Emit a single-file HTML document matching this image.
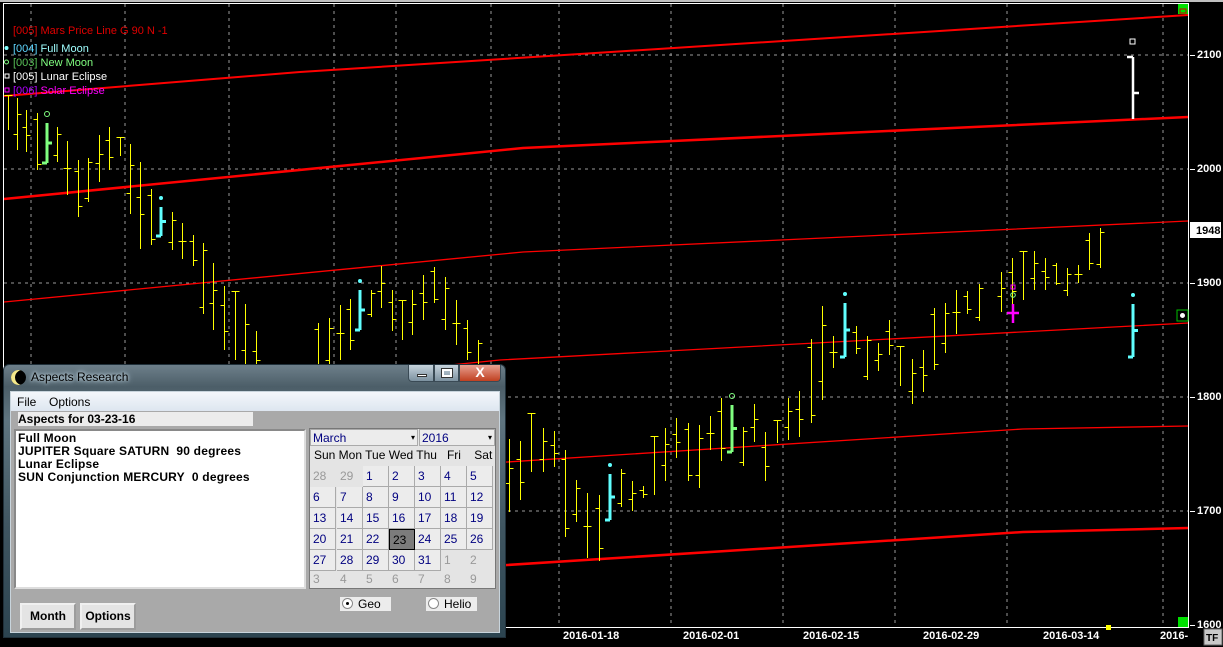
<!DOCTYPE html>
<html><head><meta charset="utf-8">
<style>
*{margin:0;padding:0;box-sizing:border-box}
body{width:1223px;height:647px;background:#000;position:relative;overflow:hidden;font-family:"Liberation Sans",sans-serif}
svg{position:absolute;left:0;top:0}
.dlg{position:absolute;left:3px;top:364px;width:503px;height:274px;border-radius:6px 6px 0 0;border:1px solid #20303a;
background:linear-gradient(180deg,#6d7f8a 0%,#4c5e68 8%,#5f7580 20%,#3f5560 60%,#2c4450 100%)}
.title{position:absolute;left:27px;top:5px;font-size:12px;color:#000;text-shadow:0 0 6px #cfe3ee,0 0 3px #cfe3ee}
.moon{position:absolute;left:7px;top:5px;width:15px;height:15px;border-radius:50%;background:#000;box-shadow:inset 4px 0 0 #f4e88a}
.cb{position:absolute;top:0;height:17px;border:1px solid #3a4a55;border-top:none}
.client{position:absolute;left:6px;top:26px;width:490px;height:242px;background:#a9a9a9;border:1px solid #c8d4dc}
.menu{position:absolute;left:0;top:0;width:488px;height:19px;background:linear-gradient(#f4f7fb,#dde6f0);font-size:12px;color:#000}
.menu span{position:absolute;top:3px}
.lab{position:absolute;left:7px;top:20px;width:235px;height:14px;background:#ececec;font-size:12px;font-weight:bold;line-height:14px;padding-left:0}
.list{position:absolute;left:3px;top:37px;width:292px;height:160px;background:#fff;border:2px inset #ddd;font-size:12px;font-weight:bold;line-height:13px;padding:1px 0 0 2px;letter-spacing:.2px}
.cal{position:absolute;left:298px;top:36px;width:187px;height:161px;background:#e4e4e4;border:1px solid #777;font-size:12px}
.cal .c{position:absolute;width:26px;height:21px;line-height:20px;padding-left:3px;color:#000080}
.cal .g{color:#999;background:none!important;border:none!important}
.btn{position:absolute;top:211px;height:27px;background:#e4e4e4;border:2px outset #f0f0f0;font-size:12px;font-weight:bold;text-align:center;line-height:22px}
.rad{position:absolute;top:205px;height:14px;background:#ececec;font-size:12px;line-height:14px}
.rad i{position:absolute;left:2px;top:1px;width:11px;height:11px;border-radius:50%;border:1px solid #888;background:#fff}
.ax{position:absolute;color:#fff;font-size:11px;font-weight:bold}
</style></head><body>
<svg width="1223" height="647" id="s">
<rect x="0" y="0" width="1223" height="2" fill="#bfbfbf"/>
<g stroke="#9a9a9a" stroke-dasharray="3,4" stroke-width="1">
<line x1="31" y1="4" x2="31" y2="627"/><line x1="125" y1="4" x2="125" y2="627"/><line x1="229" y1="4" x2="229" y2="627"/><line x1="334" y1="4" x2="334" y2="627"/><line x1="396" y1="4" x2="396" y2="627"/><line x1="491" y1="4" x2="491" y2="627"/><line x1="559" y1="4" x2="559" y2="627"/><line x1="671" y1="4" x2="671" y2="627"/><line x1="783" y1="4" x2="783" y2="627"/><line x1="895" y1="4" x2="895" y2="627"/><line x1="1007" y1="4" x2="1007" y2="627"/><line x1="1163" y1="4" x2="1163" y2="627"/>
<line x1="4" y1="55" x2="1188" y2="55"/><line x1="4" y1="169" x2="1188" y2="169"/><line x1="4" y1="283" x2="1188" y2="283"/><line x1="4" y1="397" x2="1188" y2="397"/><line x1="4" y1="511" x2="1188" y2="511"/>
</g>
<g fill="none" stroke="#ff0000">
<polyline stroke-width="2" points="4,96 300,72 1188,15"/>
<polyline stroke-width="2.5" points="4,199 523,148 1188,117"/>
<polyline stroke-width="1.3" points="4,302 523,252 1188,221"/>
<polyline stroke-width="1.3" points="4,410 500,360 1188,323"/>
<polyline stroke-width="1.3" points="4,510 507,462 1023,429 1188,426"/>
<polyline stroke-width="2.5" points="4,615 507,565 1023,532 1188,528"/>
</g>
<g id="bars" stroke="#ffff00" stroke-width="1"></g>
<g id="spec"></g>
<line x1="3.5" y1="3" x2="3.5" y2="627" stroke="#fff"/>
<line x1="3" y1="3.5" x2="1188" y2="3.5" stroke="#fff"/>
<line x1="1188.5" y1="3" x2="1188.5" y2="628" stroke="#fff"/>
<line x1="3" y1="627.5" x2="1189" y2="627.5" stroke="#fff"/>
<g stroke="#fff"><line x1="1190" y1="55.5" x2="1195" y2="55.5"/><line x1="1190" y1="169.5" x2="1195" y2="169.5"/><line x1="1190" y1="283.5" x2="1195" y2="283.5"/><line x1="1190" y1="397.5" x2="1195" y2="397.5"/><line x1="1190" y1="511.5" x2="1195" y2="511.5"/><line x1="1190" y1="625.5" x2="1195" y2="625.5"/></g>
<rect x="1178" y="4" width="10" height="10" fill="#00e000"/><rect x="1180" y="9" width="6" height="4" fill="none" stroke="#c00"/>
<rect x="1178" y="617" width="10" height="10" fill="#00e000"/>
<rect x="1177" y="310" width="11" height="11" fill="#000" stroke="#00c000"/><circle cx="1182.5" cy="315.5" r="3" fill="#fff" stroke="#000"/>
<rect x="1106" y="625" width="5" height="5" fill="#ffff00"/>
<rect x="1190" y="222" width="31" height="16" fill="#fff"/>
<text x="1196" y="234" font-size="11" font-weight="bold" font-family="Liberation Sans">1948</text>
<rect x="1204" y="629" width="18" height="16" fill="#c8c8c8" stroke="#666"/>
<text x="1206" y="641" font-size="10" font-weight="bold" fill="#000" font-family="Liberation Sans">TF</text>
<g font-family="Liberation Sans" font-size="11">
<text x="13" y="34" fill="#e00000">[005] Mars Price Line G 90 N -1</text>
<text x="13" y="52" fill="#5fd7ff">[004] <tspan fill="#a0ffff">Full Moon</tspan></text>
<text x="13" y="66" fill="#58c058">[003] <tspan fill="#80ff80">New Moon</tspan></text>
<text x="13" y="80" fill="#fff">[005] Lunar Eclipse</text>
<text x="13" y="94" fill="#b000ff">[006] <tspan fill="#ff00ff">Solar Eclipse</tspan></text>
</g>
<circle cx="6.5" cy="48" r="2" fill="#80ffff"/><circle cx="6.5" cy="62" r="2" fill="none" stroke="#80ff80"/><rect x="5" y="74" width="4" height="4" fill="none" stroke="#fff"/><rect x="5" y="88" width="4" height="4" fill="none" stroke="#f0f"/>
</svg>
<div class="ax" style="left:1197px;top:49px">2100</div>
<div class="ax" style="left:1197px;top:163px">2000</div>
<div class="ax" style="left:1197px;top:277px">1900</div>
<div class="ax" style="left:1197px;top:391px">1800</div>
<div class="ax" style="left:1197px;top:505px">1700</div>
<div class="ax" style="left:1197px;top:619px">1600</div>
<div class="ax" style="left:563px;top:630px">2016-01-18</div>
<div class="ax" style="left:683px;top:630px">2016-02-01</div>
<div class="ax" style="left:803px;top:630px">2016-02-15</div>
<div class="ax" style="left:923px;top:630px">2016-02-29</div>
<div class="ax" style="left:1043px;top:630px">2016-03-14</div>
<div class="ax" style="left:1160px;top:630px">2016-</div>

<div class="dlg">
<div class="moon"></div>
<div class="title">Aspects Research</div>
<div class="cb" style="left:404px;width:26px;background:linear-gradient(#c6d3dc,#7d92a0);border-radius:0 0 0 4px"><div style="position:absolute;left:8px;top:9px;width:10px;height:3px;background:#fff;border:1px solid #333"></div></div>
<div class="cb" style="left:430px;width:25px;background:linear-gradient(#c6d3dc,#7d92a0)"><div style="position:absolute;left:7px;top:4px;width:10px;height:8px;border:2px solid #fff;outline:1px solid #333"></div></div>
<div class="cb" style="left:455px;width:42px;background:linear-gradient(#e8a090,#c04020);border-radius:0 0 4px 0;color:#fff;font-weight:bold;font-size:14px;text-align:center;line-height:15px">X</div>
<div class="client">
<div class="menu"><span style="left:6px">File</span><span style="left:38px">Options</span></div>
<div class="lab">Aspects for 03-23-16</div>
<div class="list">Full Moon<br>JUPITER Square SATURN&nbsp; 90 degrees<br>Lunar Eclipse<br>SUN Conjunction MERCURY&nbsp; 0 degrees</div>
<div class="cal" id="cal">
<div style="position:absolute;left:0;top:0;width:108px;height:17px;background:#ececec;border:1px solid #aaa;color:#000080;padding-left:2px;line-height:16px">March<span style="position:absolute;right:2px;color:#000;font-size:8px">▾</span></div>
<div style="position:absolute;left:109px;top:0;width:76px;height:17px;background:#ececec;border:1px solid #aaa;color:#000080;padding-left:2px;line-height:16px">2016<span style="position:absolute;right:2px;color:#000;font-size:8px">▾</span></div>
<div style="position:absolute;left:4px;top:19px;width:185px;word-spacing:0;white-space:pre;color:#000">Sun Mon Tue Wed Thu&nbsp;&nbsp; Fri&nbsp;&nbsp;&nbsp; Sat</div>
</div>
<div class="btn" style="left:9px;width:56px">Month</div>
<div class="btn" style="left:69px;width:56px">Options</div>
<div class="rad" style="left:329px;width:51px"><i><b style="position:absolute;left:3px;top:3px;width:3px;height:3px;background:#000;border-radius:50%"></b></i><span style="position:absolute;left:18px">Geo</span></div>
<div class="rad" style="left:415px;width:51px"><i></i><span style="position:absolute;left:18px">Helio</span></div>
</div>
</div>
<script>
var cal=document.getElementById('cal'),xs=[0,27,53,79,105,131,157],h='';
var days=[28,29,1,2,3,4,5,6,7,8,9,10,11,12,13,14,15,16,17,18,19,20,21,22,23,24,25,26,27,28,29,30,31,1,2,3,4,5,6,7,8,9];
var ys=[37,58,79,100,121,140];
for(var i=0;i<42;i++){var r=Math.floor(i/7),c=i%7;var g=(i<2||i>=33);var st='left:'+xs[c]+'px;top:'+ys[r]+'px;';
if(!g)st+='background:#ececec;border-right:1px solid #aaa;border-bottom:1px solid #aaa;';
if(days[i]==23&&!g)st+='background:#7c7c7c;border:1px solid #000;color:#000;';
h+='<div class="c'+(g?' g':'')+'" style="'+st+'">'+days[i]+'</div>';}
cal.insertAdjacentHTML('beforeend',h);
var B=[[8,95,130],[17,98,150],[26,110,152],[37,113,170],[57,127,162],[67,141,195],[78,160,217],[88,158,202],[99,135,182],[109,127,170],[120,137,156],[130,144,214],[140,162,249],[151,189,245],[172,212,250],[182,223,259],[193,235,266],[203,243,314],[213,263,330],[224,286,350],[235,291,360],[245,304,370],[256,331,380],[318,323,380],[329,318,370],[340,305,360],[350,299,350],[371,290,317],[381,266,308],[392,290,331],[402,300,340],[412,290,335],[423,275,320],[434,267,303],[445,277,330],[456,300,345],[467,320,360],[478,340,370],
[509,439,512],[520,441,500],[531,413,472],[543,428,472],[554,431,467],[565,450,537],[576,480,522],[587,493,558],[599,495,561],[621,469,507],[632,481,511],[643,486,498],[654,436,495],[665,428,481],[676,418,458],[688,423,481],[699,425,488],[710,416,450],[721,398,461],[743,427,466],[754,404,442],[765,432,481],[777,420,443],[788,398,440],[799,391,437],[811,339,423],[822,306,400],[833,336,368],[856,326,354],[867,336,380],[878,343,371],[889,320,355],[900,346,386],[912,359,404],[923,350,392],[934,308,370],[945,303,353],[956,290,334],[967,291,314],[979,284,321],[1001,272,312],[1012,258,305],[1023,251,300],[1034,251,290],[1045,258,290],[1056,263,285],[1067,268,296],[1078,265,283],[1089,233,270],[1100,228,268]];
var s='';B.forEach(function(b,i){var x=b[0]+.5,r=b[2]-b[1];var o=Math.round(b[1]+r*((i*37%10)/10))+.5,c=Math.round(b[1]+r*((i*53%10)/10))+.5;
s+='<line x1="'+x+'" y1="'+b[1]+'" x2="'+x+'" y2="'+b[2]+'"/><line x1="'+(x-4)+'" y1="'+o+'" x2="'+x+'" y2="'+o+'"/><line x1="'+x+'" y1="'+c+'" x2="'+(x+4)+'" y2="'+c+'"/>';});
document.getElementById('bars').innerHTML=s;
function sp(x,hi,lo,col,mark){var t='<g stroke="'+col+'" stroke-width="3"><line x1="'+x+'" y1="'+hi+'" x2="'+x+'" y2="'+lo+'"/><line x1="'+(x-5)+'" y1="'+lo+'" x2="'+x+'" y2="'+lo+'"/><line x1="'+x+'" y1="'+((hi+lo)/2)+'" x2="'+(x+5)+'" y2="'+((hi+lo)/2)+'"/></g>';
if(mark=='d')t+='<circle cx="'+x+'" cy="'+(hi-9)+'" r="2" fill="'+col+'"/>';
if(mark=='o')t+='<circle cx="'+x+'" cy="'+(hi-9)+'" r="2.5" fill="none" stroke="'+col+'"/>';return t;}
var q=sp(47,123,163,'#80ff80','o')+sp(161,207,236,'#60ffff','d')+sp(360,290,330,'#60ffff','d')+sp(610,474,520,'#60ffff','d')+sp(732,405,452,'#80ff80','o')+sp(845,303,357,'#60ffff','d')+sp(1133,304,357,'#60ffff','d');
q+='<g stroke="#fff" stroke-width="2.5"><line x1="1133" y1="57" x2="1133" y2="119"/><line x1="1127" y1="57" x2="1133" y2="57"/><line x1="1133" y1="93" x2="1139" y2="93"/></g><rect x="1130" y="39" width="5" height="5" fill="none" stroke="#fff"/>';
q+='<g stroke="#ff00ff" stroke-width="2.5"><line x1="1013" y1="304" x2="1013" y2="323"/><line x1="1007" y1="313" x2="1019" y2="313"/></g><circle cx="1013" cy="295" r="2.3" fill="none" stroke="#80ff80"/><rect x="1011" y="285" width="4" height="4" fill="none" stroke="#f0f"/>';
document.getElementById('spec').innerHTML=q;
</script>
</body></html>
